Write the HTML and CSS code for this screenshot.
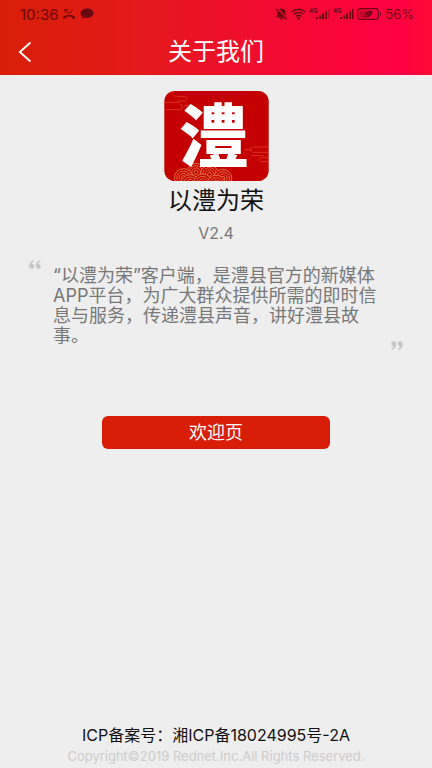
FILE: index.html
```
<!DOCTYPE html>
<html lang="zh-CN">
	<head>
		<meta charset="utf-8">
		<meta name="viewport" content="width=device-width, initial-scale=1">
		<title>关于我们</title>
		<link rel="stylesheet" href="styles.css">
	</head>
	<body>
		<header class="header">
			<div class="status">
				<div class="status_left">
					<span>10:36</span>
					<!-- missed call -->
					<svg width="14" height="12" viewBox="0 0 14 12" fill="none" stroke="currentColor">
						<path d="M1 10.500V9C4 6.400 10 6.400 13 9v1.500h-3V9C8.500 8.200 5.500 8.200 4 9v1.500z" fill="currentColor" stroke="none"/>
						<path d="M3 4.500V1.500h3M3 1.500l4 4 4-4" stroke-width="1"/>
					</svg>
					<svg width="14" height="12" viewBox="0 0 14 12" fill="currentColor">
						<path d="M7.500.5C11 .5 13.500 2.600 13.500 5.300S10.500 10 7 10c-1 0-1.500-.2-2-.4L2.500 11.300 3 9C1.500 8.500.5 7 .5 5.500.5 2.500 4 .5 7.500.5z"/>
					</svg>
				</div>
				<div class="status_right">
					<!-- muted bell -->
					<svg width="13" height="12" viewBox="0 0 13 12">
						<path d="M6.500.5C9.500 1 10.500 2.500 10.500 5v2.500L12 9.500H1L2.500 7.500V5C2.500 2.500 3.500 1 6.500.5zM5 10h3c0 2-3 2-3 0z" fill="currentColor"/>
						<path d="M2 .5l10 10.500" stroke="#f50a35" stroke-width="2"/>
						<path d="M1 .8l10.500 10.700" stroke="currentColor" stroke-width="1.200"/>
					</svg>
					<!-- wifi -->
					<svg width="15" height="12" viewBox="0 0 15 12" fill="none" stroke="currentColor" stroke-width="1.400">
						<path d="M.8 4C4.500.3 10.500.3 14.200 4M2.800 6.300c2.500-2.600 6.900-2.600 9.400 0M4.900 8.500c1.500-1.400 3.700-1.400 5.200 0"/>
						<circle cx="7.500" cy="10.300" r=".7" fill="currentColor"/>
					</svg>
					<!-- signal, sim 1 -->
					<svg class="signal" width="21" height="12" viewBox="0 0 21 12" fill="currentColor">
						<text x="0" y="5">4G</text>
						<path d="M7 9h2v2H7zM10 7.500h2V11h-2zM13 5.500h2V11h-2zM16 3.500h2V11h-2z"/>
						<path d="M19 1h1.500v10H19z" opacity=".3"/>
					</svg>
					<!-- signal, sim 2 -->
					<svg class="signal" width="21" height="12" viewBox="0 0 21 12" fill="currentColor">
						<text x="0" y="5">4G</text>
						<path d="M7 9h2v2H7zM10 7.500h2V11h-2zM13 5.500h2V11h-2zM16 3.500h2V11h-2zM19 1h1.500v10H19z"/>
					</svg>
					<!-- battery -->
					<svg width="25" height="12" viewBox="0 0 25 12">
						<rect x=".7" y=".7" width="20.500" height="10.600" rx="2.500" fill="none" stroke="currentColor" stroke-width="1.200"/>
						<rect x="2.500" y="2.500" width="10" height="7" rx="1" fill="currentColor" opacity=".35"/>
						<path d="M23 4c1.300.4 1.300 3.600 0 4z" fill="currentColor"/>
						<path d="M15.500 2.500c0 5-2.500 7-6.500 6l-1.500 1.300-.5-.6 1.300-1.400C7 4 11 3 15.500 2.500z" fill="currentColor"/>
						<path d="M8.800 8L13 4.800" stroke="#fa0440" stroke-width=".6"/>
					</svg>
					<span>56%</span>
				</div>
			</div>
			<nav class="nav">
				<button class="back" type="button" aria-label="返回">
					<svg width="14" height="22" viewBox="0 0 14 22" fill="none" stroke="#fff" stroke-width="1.800">
						<path d="M12.500 1.500L1.800 11l10.700 9.500"/>
					</svg>
				</button>
				<h1 class="title">关于我们</h1>
			</nav>
		</header>

		<main class="about">
			<svg class="logo" width="105" height="90" viewBox="0 0 314 270" role="img" aria-label="以澧为荣">
				<defs>
					<clipPath id="logo_shape"><rect width="314" height="270" rx="32"/></clipPath>
					<g id="wave">
						<circle r="27" fill="#c40001"/>
						<circle r="20"/>
						<circle r="13"/>
						<circle r="6"/>
					</g>
				</defs>
				<g clip-path="url(#logo_shape)">
					<rect width="314" height="270" fill="#c40001"/>
					<g fill="none" stroke="#e2502f" stroke-width="2">
						<path d="M0 34h48M32 16h28c10 0 10 14 0 14H40M4 56h42c12 0 12-16 0-16M60 44h20"/>
						<path d="M314 168h-46c-12 0-12 16 0 16h46M262 194h38M314 200h-22c-10 0-10 12 0 12h22M240 176h22"/>
					</g>
					<g fill="none" stroke="#e07040" stroke-width="3">
						<use href="#wave" x="96" y="244"/>
						<use href="#wave" x="136" y="250"/>
						<use href="#wave" x="58" y="260"/>
						<use href="#wave" x="176" y="262"/>
						<use href="#wave" x="78" y="278"/>
						<use href="#wave" x="116" y="276"/>
						<use href="#wave" x="156" y="280"/>
					</g>
				</g>
				<text class="logo_char" x="150" y="212" text-anchor="middle">澧</text>
			</svg>
			<h2 class="name">以澧为荣</h2>
			<p class="version">V2.4</p>

			<div class="intro">
				<svg class="quote" width="12" height="9" viewBox="0 0 12 9">
					<path id="mark" d="M4.500.3C2 .8.300 3 .3 5.800.3 7.600 1.200 8.700 2.800 8.700S5.300 7.600 5.300 6.200 4.300 4 3 4C3 2.800 3.700 2 5 1.300z"/>
					<use href="#mark" x="6.500"/>
				</svg>
				<p class="text">“以澧为荣”客户端，是澧县官方的新媒体APP平台，为广大群众提供所需的即时信息与服务，传递澧县声音，讲好澧县故事。</p>
				<svg class="quote quote_end" width="12" height="9" viewBox="0 0 12 9">
					<g transform="rotate(180 6 4.500)">
						<use href="#mark"/>
						<use href="#mark" x="6.500"/>
					</g>
				</svg>
			</div>

			<button class="welcome" type="button">欢迎页</button>
		</main>

		<footer class="footer">
			<p class="icp">ICP备案号：湘ICP备18024995号-2A</p>
			<p class="copyright">Copyright©2019 Rednet.Inc.All Rights Reserved.</p>
		</footer>
	</body>
</html>
```

FILE: styles.css
```
*{
	box-sizing:border-box;
	margin:0;
	padding:0;
}
body{
	display:flex;
	flex-direction:column;
	min-height:100vh;
	background:#eeeeee;
	color:#111;
	font-family:Inter,"Noto Sans CJK SC",sans-serif;
}
button{
	border:0;
	font-family:inherit;
	cursor:pointer;
}
svg{
	display:block;
	flex:none;
}
.header{
	background:linear-gradient(to right,#d81f06 0%,#e4191c 33%,#f20b30 62%,#ff0043 92%,#ff0a36 100%);
}
.status{
	display:flex;
	justify-content:space-between;
	align-items:center;
	height:28px;
	padding:0 18px 0 20px;
	color:#6b0710;
}
.status_left,
.status_right{
	display:flex;
	align-items:center;
}
.status_left{
	gap:4px;
	font-size:15px;
}
.status_right{
	gap:3px;
	font-size:13px;
}
.signal{
	font-size:6px;
	font-weight:700;
}
.nav{
	display:grid;
	grid-template-columns:48px 1fr 48px;
	align-items:center;
	height:47px;
}
.back{
	display:flex;
	align-items:center;
	height:40px;
	padding-left:18px;
	background:none;
}
.title{
	color:#fff;
	font-size:24px;
	font-weight:400;
	line-height:32px;
	text-align:center;
}
.about{
	display:flex;
	flex-direction:column;
	align-items:center;
	flex:1;
	padding-top:16px;
}
.logo{
	overflow:visible;
}
.logo_char{
	fill:#fff;
	font-family:"Noto Sans CJK SC",sans-serif;
	font-size:208px;
	font-weight:900;
}
.name{
	margin-top:4px;
	font-size:24px;
	font-weight:400;
	line-height:32px;
}
.version{
	margin-top:6px;
	color:#777;
	font-size:16px;
	line-height:20px;
}
.intro{
	display:grid;
	grid-template-columns:24px 1fr 24px;
	align-self:stretch;
	margin-top:17px;
	padding:0 29px;
}
.quote{
	fill:#c6c6c6;
}
.quote_end{
	align-self:end;
	justify-self:end;
}
.text{
	padding:6px 0 4px;
	color:#777;
	font-size:18px;
	line-height:20px;
}
.welcome{
	width:53%;
	height:33px;
	margin-top:66px;
	border-radius:6px;
	background:#d81e06;
	color:#fff;
	font-size:18px;
	line-height:24px;
}
.footer{
	padding-bottom:2px;
	text-align:center;
}
.icp{
	font-size:16px;
	line-height:22px;
}
.copyright{
	color:#ccc;
	font-size:13px;
	line-height:20px;
}
```
